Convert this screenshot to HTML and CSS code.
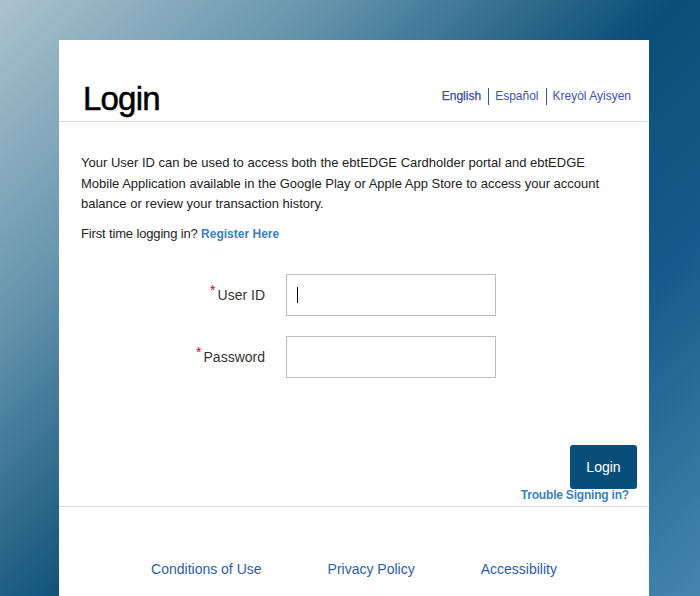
FILE: index.html
```html
<!DOCTYPE html>
<html lang="en">
<head>
<meta charset="utf-8">
<title>Login</title>
<link rel="stylesheet" href="styles.css">
</head>
<body>
<div class="page">
  <main class="card">
    <header class="card-header">
      <h1 class="title">Login</h1>
      <nav class="langs">
        <a class="lang lang-active" href="#">English</a>
        <a class="lang" href="#">Español</a>
        <a class="lang" href="#">Kreyòl Ayisyen</a>
      </nav>
    </header>
    <section class="card-body">
      <p class="intro">Your User ID can be used to access both the ebtEDGE Cardholder portal and ebtEDGE Mobile Application available in the Google Play or Apple App Store to access your account balance or review your transaction history.</p>
      <p class="first">First time logging in? <a class="link-strong" href="#">Register Here</a></p>
      <form class="form">
        <label class="label" for="uid"><span class="req">*</span>User ID</label>
        <div class="field">
          <input class="input" id="uid" type="text">
          <span class="caret"></span>
        </div>
        <label class="label" for="pwd"><span class="req">*</span>Password</label>
        <div class="field">
          <input class="input" id="pwd" type="password">
        </div>
      </form>
      <div class="actions">
        <button class="btn" type="button">Login</button>
        <a class="trouble" href="#">Trouble Signing in?</a>
      </div>
    </section>
    <footer class="card-footer">
      <a class="foot-link" href="#">Conditions of Use</a>
      <a class="foot-link" href="#">Privacy Policy</a>
      <a class="foot-link" href="#">Accessibility</a>
    </footer>
  </main>
</div>
</body>
</html>
```
FILE: styles.css
```css
* { box-sizing: border-box; }
html, body {
  margin: 0;
  padding: 0;
  height: 100%;
  overflow: hidden;
}
body {
  font-family: "Liberation Sans", Arial, sans-serif;
  background: linear-gradient(135deg, #abc2ce 0%, #6897ae 24%, #0b4f77 52%, #17598a 72%, #4686ad 100%);
}
.page {
  height: 100%;
  padding-top: 40px;
  padding-left: 59px;
}
.card {
  width: 590px;
  height: 620px;
  background: #fff;
}
.card-header {
  display: flex;
  align-items: flex-end;
  justify-content: space-between;
  padding: 0 18px 3px 22px;
  height: 82px;
  border-bottom: 1px solid #dcdcdc;
}
.title {
  margin: 0;
  font-size: 33px;
  font-weight: normal;
  line-height: 38px;
  color: #000;
  letter-spacing: -0.8px;
  padding-left: 2px;
  -webkit-text-stroke: 0.5px #000;
}
.langs {
  display: flex;
  align-items: center;
  padding-bottom: 13px;
}
.lang {
  font-size: 12px;
  line-height: 17px;
  color: #4151b8;
  text-decoration: none;
  padding: 0 7px 0 6px;
  border-left: 1px solid #3f51b5;
}
.lang:first-child {
  border-left: none;
  padding-left: 0;
}
.lang:last-child { padding-right: 0; }
.lang-active {
  color: #3a4aa8;
  -webkit-text-stroke: 0.25px #3a4aa8;
}
.card-body {
  padding: 31px 22px 0 22px;
  border-bottom: 1px solid #dcdcdc;
  height: 385px;
}
.intro {
  margin: 0;
  max-width: 526px;
  font-size: 13px;
  line-height: 20.5px;
  color: #222;
}
.first {
  margin: 9px 0 0 0;
  font-size: 13px;
  line-height: 20px;
  color: #222;
  letter-spacing: -0.15px;
}
.link-strong {
  color: #3a7fc0;
  font-weight: bold;
  font-size: 12px;
  letter-spacing: 0;
  text-decoration: none;
}
.form {
  display: grid;
  grid-template-columns: 184px 210px;
  column-gap: 21px;
  row-gap: 20px;
  margin-top: 30px;
  align-items: center;
}
.label {
  text-align: right;
  font-size: 14px;
  color: #333;
  line-height: 16px;
  padding-top: 1px;
}
.req {
  color: #d0021b;
  font-size: 14px;
  position: relative;
  top: -5px;
  margin-right: 2px;
}
.field {
  position: relative;
  height: 42px;
}
.input {
  display: block;
  width: 210px;
  height: 42px;
  border: 1px solid #bdbdbd;
  padding: 0 10px;
  font-size: 14px;
  font-family: inherit;
  outline: none;
  background: #fff;
}
.caret {
  position: absolute;
  left: 11px;
  top: 13px;
  width: 1px;
  height: 16px;
  background: #000;
}
.actions {
  display: flex;
  flex-direction: column;
  align-items: flex-end;
  margin-top: 67px;
  margin-right: -10px;
}
.btn {
  width: 67px;
  height: 44px;
  border: none;
  border-radius: 3px;
  background: #074f7a;
  color: #fff;
  font-family: inherit;
  font-size: 14px;
  cursor: pointer;
}
.trouble {
  margin-top: -1px;
  margin-right: 8px;
  font-size: 12px;
  line-height: 14px;
  font-weight: bold;
  color: #3a7fc0;
  text-decoration: none;
  letter-spacing: -0.2px;
}
.card-footer {
  display: flex;
  justify-content: center;
  gap: 66px;
  padding-top: 54px;
}
.foot-link {
  font-size: 14px;
  line-height: 16px;
  color: #2b5dab;
  text-decoration: none;
}
```
